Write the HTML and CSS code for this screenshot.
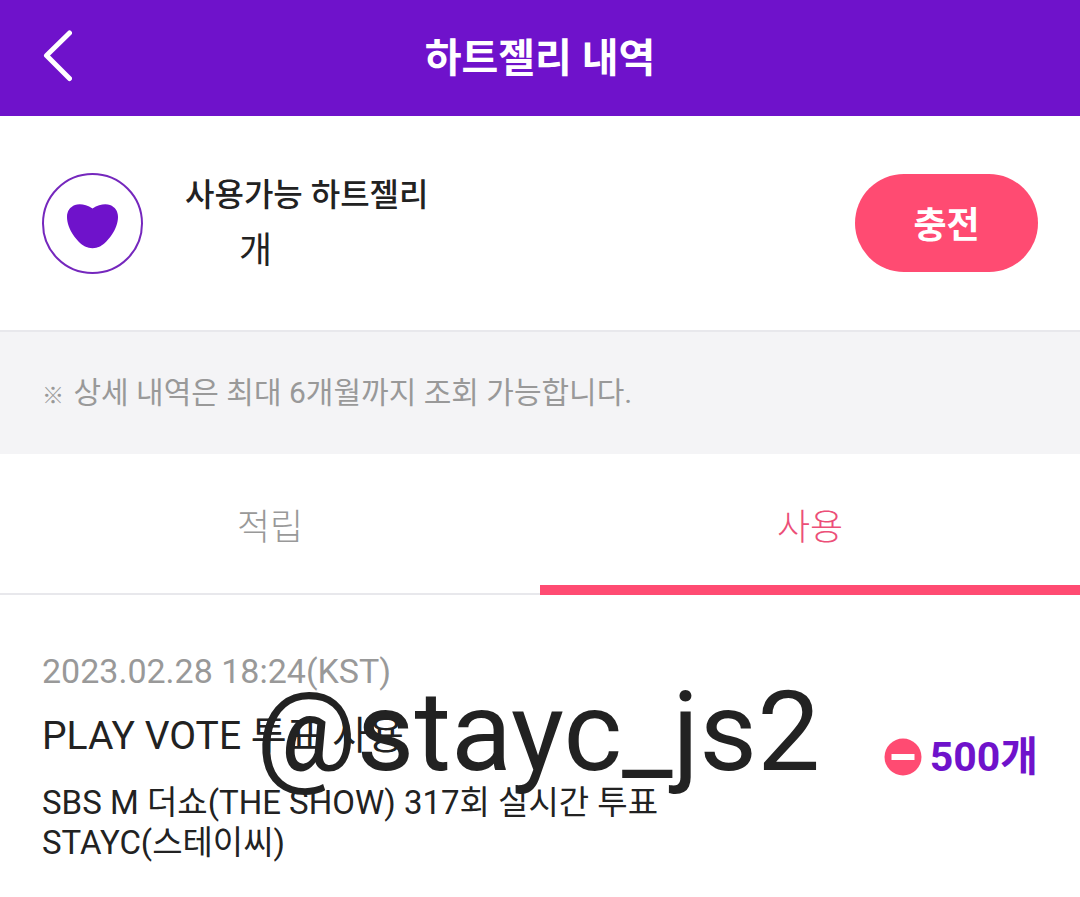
FILE: index.html
```html
<!DOCTYPE html>
<html lang="ko">
<head>
<meta charset="utf-8">
<meta name="viewport" content="width=device-width, initial-scale=1">
<title>하트젤리 내역</title>
<link rel="stylesheet" href="styles.css">
</head>
<body>
<header class="topbar">
  <button class="back" type="button" aria-label="뒤로">
    <svg width="30" height="56" viewBox="0 0 30 56"><path d="M27.500 3 4.500 25.500l23 23" fill="none" stroke="#fff" stroke-width="5" stroke-linecap="round" stroke-linejoin="round"/></svg>
  </button>
  <h1 class="title">하트젤리 내역</h1>
</header>
<main>
  <section class="balance">
    <svg class="heart" width="101" height="101" viewBox="0 0 101 101"><circle cx="50.500" cy="50.500" r="49.500" fill="#fff" stroke="#7527bd" stroke-width="2"/><path d="M50.500 35.500C44 31 37 30.500 33 32c-5 2-8 6-8 12 0 12 10 25 18 29.500q7.500 3.500 15 0C66 69 76 56 76 44c0-6-3-10-8-12-4-1.500-11-1-17.500 3.500Z" fill="#6f12cb"/></svg>
    <div class="balance-text">
      <p class="balance-label">사용가능 하트젤리</p>
      <p class="balance-value">개</p>
    </div>
    <button class="charge" type="button">충전</button>
  </section>
  <p class="notice"><span class="mark">※</span> 상세 내역은 최대 6개월까지 조회 가능합니다.</p>
  <nav class="tabs">
    <button class="tab" type="button">적립</button>
    <button class="tab tab-active" type="button">사용</button>
  </nav>
  <article class="entry">
    <div class="entry-text">
      <time class="date">2023.02.28 18:24(KST)</time>
      <h2 class="entry-title">PLAY VOTE 투표 사용</h2>
      <p class="detail">SBS M 더쇼(THE SHOW) 317회 실시간 투표<br>STAYC(스테이씨)</p>
    </div>
    <div class="amount">
      <svg width="38" height="38" viewBox="0 0 38 38"><circle cx="19" cy="19" r="18.500" fill="#ff4b72"/><path d="M7.500 19h23" stroke="#fff" stroke-width="6"/></svg>
      <span>500개</span>
    </div>
    <span class="watermark">@stayc_js2</span>
  </article>
</main>
</body>
</html>
```

FILE: styles.css
```css
* { box-sizing: border-box; }
body { margin: 0; background: #fff; color: #222; font-family: Roboto, "Noto Sans CJK KR", sans-serif; }
h1, h2, p { margin: 0; }
button { border: 0; padding: 0; background: none; font: inherit; cursor: pointer; }
svg { display: block; flex: none; }
.topbar { display: grid; grid-template-columns: 60px 1fr 60px; align-items: center; min-height: 116px; padding: 0 42px; background: #6f12cb; color: #fff; }
.title { padding-top: 2px; font-size: 40px; line-height: 56px; font-weight: 700; text-align: center; }
.balance { display: flex; align-items: center; min-height: 216px; padding: 0 42px; border-bottom: 2px solid #e8e8ec; }
.balance-text { flex: 1; padding-left: 42px; }
.balance-label { font-size: 32px; line-height: 56px; font-weight: 500; }
.balance-value { padding-left: 54px; font-size: 36px; line-height: 56px; }
.charge { width: 183px; height: 98px; padding-bottom: 2px; border-radius: 49px; background: #ff4b72; color: #fff; font-size: 36px; font-weight: 700; }
.notice { padding: 36px 42px; background: #f4f4f6; color: #999; font-size: 30px; line-height: 50px; }
.mark { margin-right: 2px; font-size: 22px; line-height: 1; font-weight: 700; }
.tabs { display: grid; grid-template-columns: 1fr 1fr; min-height: 141px; }
.tab { border-bottom: 2px solid #e8e8ec; color: #999; font-size: 36px; font-weight: 300; }
.tab-active { padding-top: 8px; border-bottom: 10px solid #ff4b72; color: #ec4f78; }
.entry { position: relative; display: flex; align-items: center; justify-content: space-between; padding: 48px 42px 32px; }
.date { display: block; color: #999; font-size: 34px; line-height: 56px; }
.entry-title { font-size: 39px; line-height: 74px; font-weight: 400; }
.detail { font-size: 33px; line-height: 40px; padding-top: 10px; }
.amount { display: flex; align-items: center; gap: 8px; padding-top: 8px; color: #6f12cb; font-size: 41px; line-height: 56px; font-weight: 700; }
.watermark { position: absolute; left: 256px; top: 71px; font-size: 112px; line-height: 132px; pointer-events: none; }
```
